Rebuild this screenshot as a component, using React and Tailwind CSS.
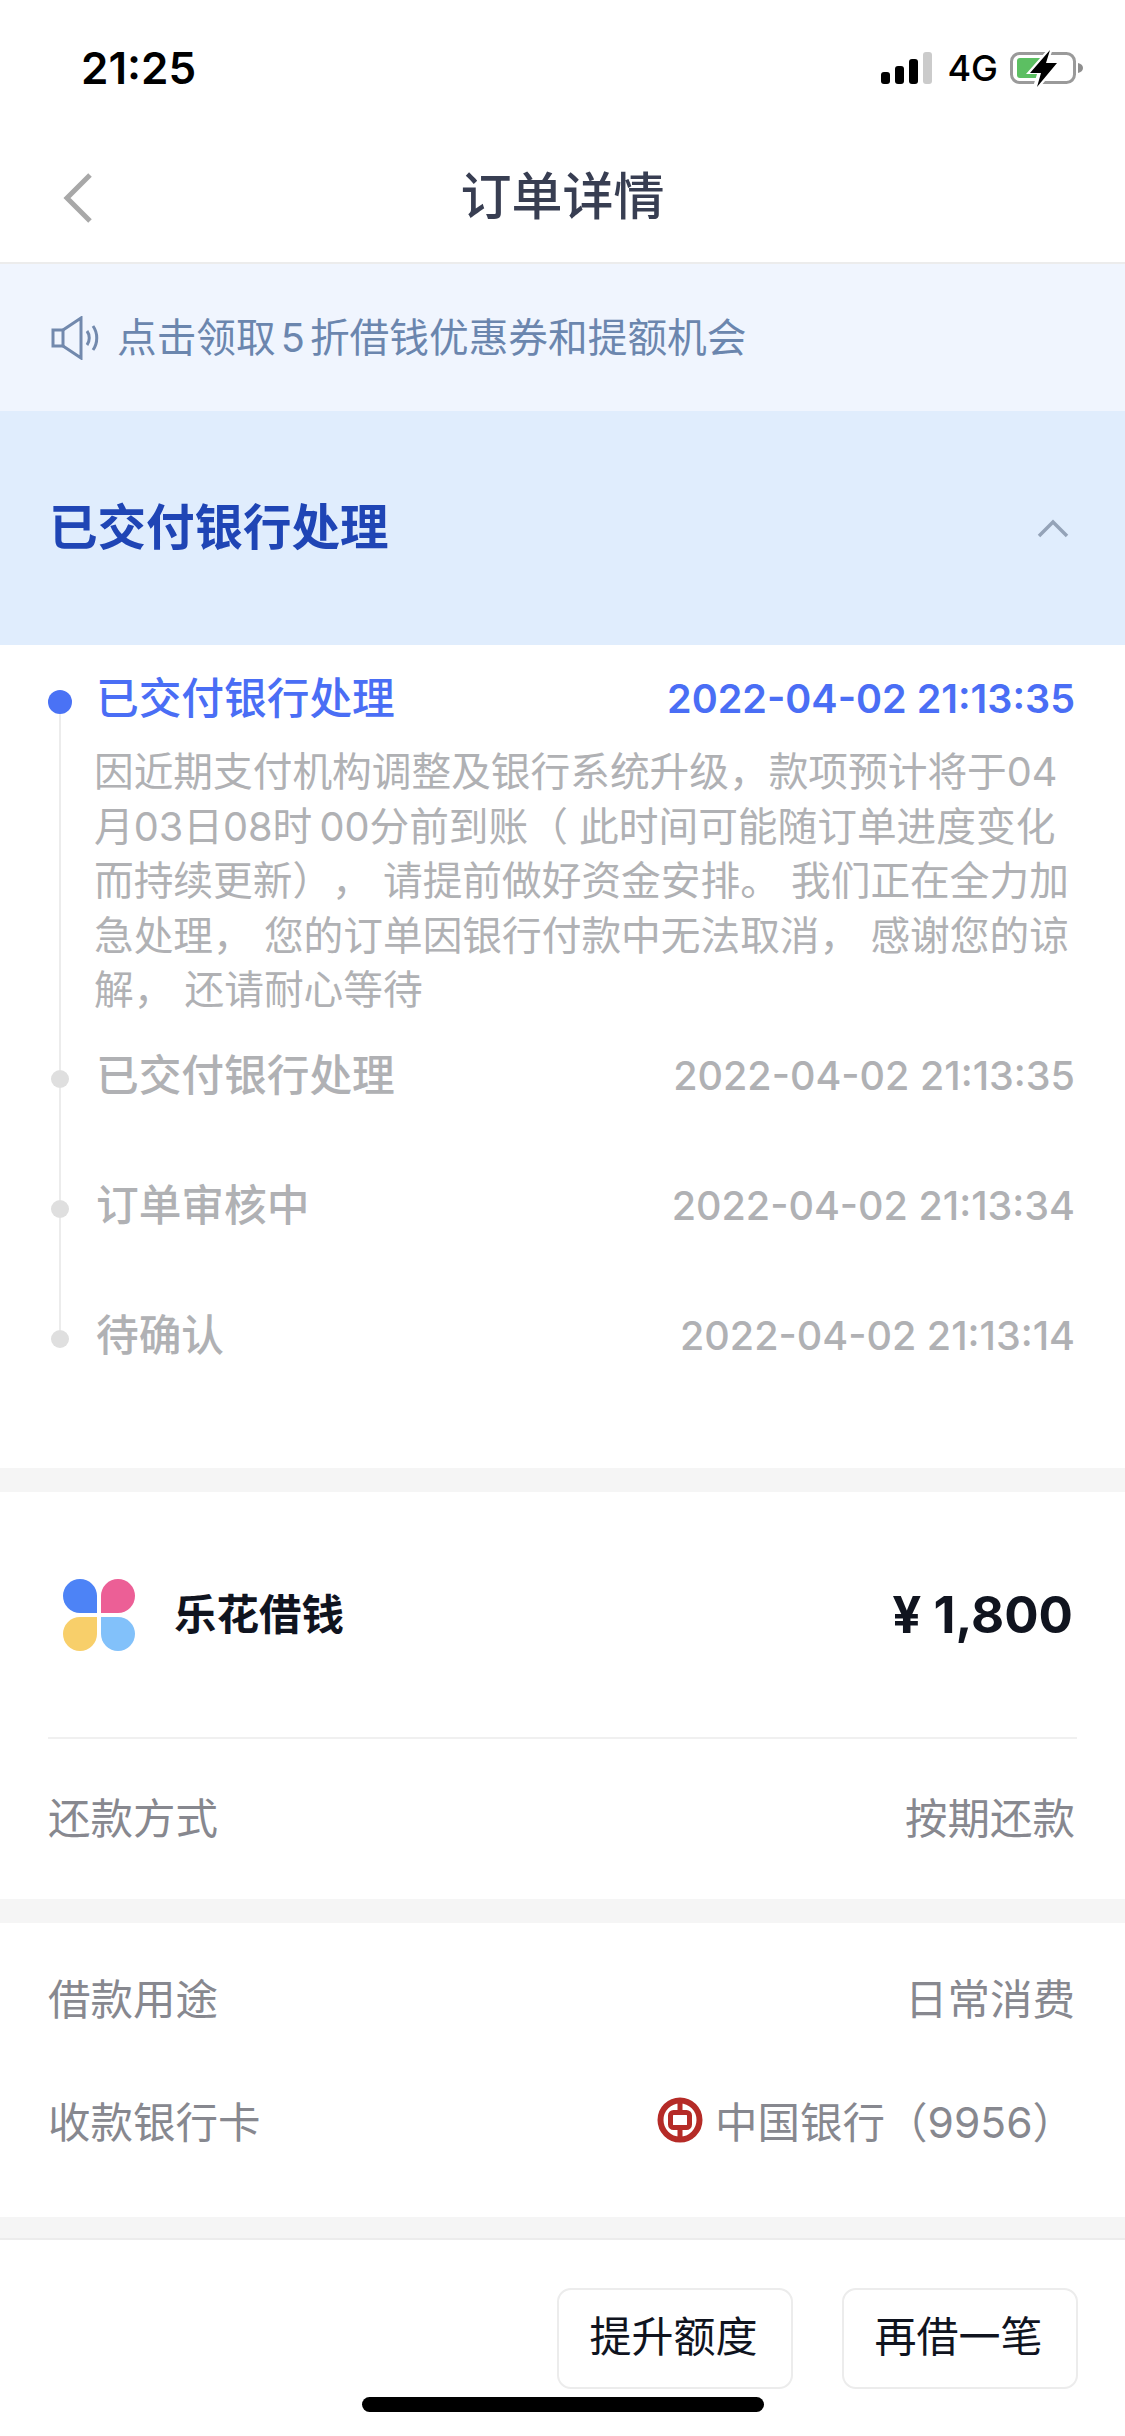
import React from 'react';

const bodyLines = [
  '因近期支付机构调整及银行系统升级，款项预计将于04',
  '月03日08时\u200900分前到账（ 此时间可能随订单进度变化',
  '而持续更新）， 请提前做好资金安排。 我们正在全力加',
  '急处理， 您的订单因银行付款中无法取消， 感谢您的谅',
  '解， 还请耐心等待',
];

const steps = [
  { title: '已交付银行处理', time: '2022-04-02 21:13:35' },
  { title: '订单审核中', time: '2022-04-02 21:13:34' },
  { title: '待确认', time: '2022-04-02 21:13:14', last: true },
];

const StatusBar = () => (
  <div className="h-[90px] pt-[41px] pl-[81px] pr-[41px] flex items-start justify-between">
    <span className="text-[44px] leading-[54px] font-semibold text-black">21:25</span>
    <div className="flex items-center h-[54px]">
      <svg width="52" height="32" viewBox="0 0 52 32" fill="none">
        <rect x="0" y="20" width="9" height="12" rx="3" fill="#000" />
        <rect x="14" y="14" width="9" height="18" rx="3" fill="#000" />
        <rect x="28" y="7" width="9" height="25" rx="3" fill="#000" />
        <rect x="42" y="0" width="9" height="32" rx="3" fill="#cbcbcb" />
      </svg>
      <span className="ml-[14px] text-[36px] leading-[54px] font-medium text-black">4G</span>
      <svg className="ml-[12px]" width="74" height="38" viewBox="0 0 74 38" fill="none">
        <rect x="1.5" y="4.500" width="63" height="29" rx="8" stroke="#9a9a9a" strokeWidth="3" />
        <rect x="7" y="9" width="27" height="20" rx="3" fill="#5cbf62" />
        <path d="M68 14c3 .5 5 2.500 5 5s-2 4.500-5 5z" fill="#8e8e8e" />
        <path d="M38 0 16 25h11l-4 13h7l21-25H38l5-13z" fill="#fff" />
        <path d="M40 1 20 24h11l-4 14 20-24H36z" fill="#000" />
      </svg>
    </div>
  </div>
);

const Petal = ({ color, corner }) => (
  <div className={`w-[34px] h-[34px] ${color} ${corner}`} />
);

const TimeRow = ({ title, time }) => (
  <div className="flex items-center justify-between h-[54px] text-[#b0b1b4]">
    <span className="text-[42.700px] leading-[54px] font-medium">{title}</span>
    <span className="text-[39.500px] leading-[54px] font-medium">{time}</span>
  </div>
);

const InfoRow = ({ label, children, className }) => (
  <div className={`flex items-center justify-between pr-[2px] text-[42.500px] leading-[54px] text-[#87888f] ${className}`}>
    <span>{label}</span>
    {children}
  </div>
);

const App = () => {
  return (
    <div className="w-[1125px] h-[2436px] relative overflow-hidden bg-white font-['Inter','Noto_Sans_CJK_SC',sans-serif]">
      <StatusBar />

      <div className="h-[174px] pt-[42px] flex items-center justify-center relative border-b-2 border-[#ececec]">
        <svg className="absolute left-[62px] top-[83px]" width="32" height="50" viewBox="0 0 32 50" fill="none">
          <path d="M28 2 5 25l23 23" stroke="#a8a8a8" strokeWidth="5" />
        </svg>
        <span className="text-[51px] leading-[60px] font-medium text-[#383e52]">订单详情</span>
      </div>

      <div className="h-[147px] bg-[#f0f5fe] flex items-center pl-[50px]">
        <svg width="52" height="44" viewBox="0 0 52 44" fill="none" stroke="#7289ad" strokeWidth="3">
          <path d="M3 14h10v16H3z" />
          <path d="M13 14 31 2v40L13 30" />
          <path d="M37 15c3 4 3 10 0 14" />
          <path d="M43 10c5 7 5 17 0 24" />
        </svg>
        <span className="ml-[15px] text-[39.700px] leading-[54px] text-[#6b86ae]">
          点击领取<span className="mx-[5px]">5</span>折借钱优惠券和提额机会
        </span>
      </div>

      <div className="h-[234px] bg-[#e0edfd] flex items-center justify-between pl-[49px] pr-[56px]">
        <span className="text-[48.500px] leading-[60px] font-semibold text-[#1f45b5]">已交付银行处理</span>
        <svg width="32" height="20" viewBox="0 0 32 20" fill="none">
          <path d="M2 18 16 4l14 14" stroke="#94a3b8" strokeWidth="3.500" />
        </svg>
      </div>

      <div className="h-[823px] pt-[27px] pl-[48px] pr-[50px] flex flex-col">
        <div className="flex">
          <div className="w-[24px] mr-[24px] flex flex-col items-center shrink-0">
            <div className="w-[24px] h-[24px] rounded-full bg-[#4a72f5] mt-[18px] shrink-0" />
            <div className="w-[2px] flex-1 bg-[#ececec]" />
          </div>
          <div className="flex-1 min-w-0 pb-[31px]">
            <div className="flex items-center justify-between h-[54px] text-[#4a6ef5]">
              <span className="text-[42.700px] leading-[54px] font-medium">已交付银行处理</span>
              <span className="text-[39.500px] leading-[54px] font-semibold">2022-04-02 21:13:35</span>
            </div>
            <div className="mt-[19px] -ml-[2px] text-[39.700px] leading-[54.500px] text-[#b0b1b4] whitespace-nowrap [text-spacing-trim:space-all]">
              {bodyLines.map((line) => (
                <div key={line}>{line}</div>
              ))}
            </div>
          </div>
        </div>
        {steps.map((step) => (
          <div key={step.time} className="flex">
            <div className="w-[24px] mr-[24px] flex flex-col items-center shrink-0">
              <div className="w-[2px] h-[21px] bg-[#ececec]" />
              <div className="w-[18px] h-[18px] rounded-full bg-[#dfdfdf] shrink-0" />
              {!step.last && <div className="w-[2px] flex-1 bg-[#ececec]" />}
            </div>
            <div className={`flex-1 min-w-0 ${step.last ? '' : 'pb-[76px]'}`}>
              <TimeRow title={step.title} time={step.time} />
            </div>
          </div>
        ))}
      </div>

      <div className="h-[24px] bg-[#f5f5f5]" />

      <div className="h-[407px] px-[48px] flex flex-col">
        <div className="h-[247px] flex items-center justify-between border-b-2 border-[#f0f0f0] pl-[15px] pr-[4px]">
          <div className="flex items-center">
            <div className="grid grid-cols-2 gap-[4px]">
              <Petal color="bg-[#4d83f6]" corner="rounded-full rounded-br-[6px]" />
              <Petal color="bg-[#ec5f96]" corner="rounded-full rounded-bl-[6px]" />
              <Petal color="bg-[#f8cf6a]" corner="rounded-full rounded-tr-[6px]" />
              <Petal color="bg-[#82c1fa]" corner="rounded-full rounded-tl-[6px]" />
            </div>
            <span className="ml-[39px] text-[42.500px] leading-[54px] font-semibold text-[#10141f]">乐花借钱</span>
          </div>
          <span className="text-[51px] leading-[60px] font-bold text-[#10141f]">¥ 1,800</span>
        </div>
        <InfoRow label="还款方式" className="flex-1">
          <span>按期还款</span>
        </InfoRow>
      </div>

      <div className="h-[24px] bg-[#f5f5f5]" />

      <div className="h-[294px] px-[48px] pt-[50px]">
        <InfoRow label="借款用途">
          <span>日常消费</span>
        </InfoRow>
        <InfoRow label="收款银行卡" className="mt-[69px]">
          <div className="flex items-center">
            <svg width="46" height="46" viewBox="0 0 46 46" fill="none" className="mr-[12px] -mt-[6px]">
              <circle cx="23" cy="23" r="19.500" stroke="#b52b27" strokeWidth="6" />
              <rect x="13.500" y="15.500" width="19" height="15" rx="3" stroke="#b52b27" strokeWidth="5" />
              <path d="M23 3v12M23 31v12" stroke="#b52b27" strokeWidth="5" />
            </svg>
            <span>中国银行（9956）</span>
          </div>
        </InfoRow>
      </div>

      <div className="h-[23px] bg-[#f5f5f5] border-b-2 border-[#ececec]" />

      <div className="flex justify-end gap-[49px] pt-[48px] pr-[47px]">
        <div className="w-[236px] h-[101px] pb-[5px] pr-[3px] rounded-[14px] border-2 border-[#ececec] flex items-center justify-center text-[42px] text-[#10141f]">提升额度</div>
        <div className="w-[236px] h-[101px] pb-[5px] pr-[3px] rounded-[14px] border-2 border-[#ececec] flex items-center justify-center text-[42px] text-[#10141f]">再借一笔</div>
      </div>

      <div className="absolute left-[362px] top-[2397px] w-[402px] h-[15px] rounded-full bg-black" />
    </div>
  );
};

export default App;
